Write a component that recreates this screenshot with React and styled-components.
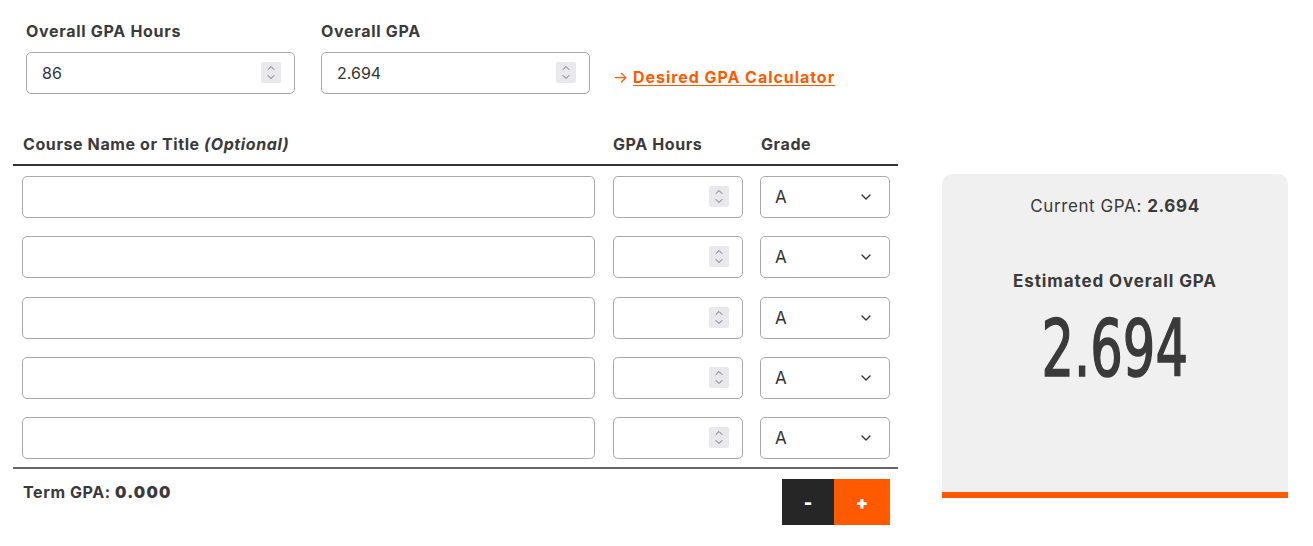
import styled, { createGlobalStyle } from "styled-components";
import { ChevronDown, ChevronUp } from "lucide-react";

const GlobalStyle = createGlobalStyle`
  body {
    margin: 0;
    background: #fff;
    font-family: Inter, "Noto Sans", sans-serif;
    color: #3a3a3a;
  }
  input[type="number"] {
    -moz-appearance: textfield;
  }
  input[type="number"]::-webkit-inner-spin-button,
  input[type="number"]::-webkit-outer-spin-button {
    -webkit-appearance: none;
    margin: 0;
  }
`;

const rows = [1, 2, 3, 4, 5];

function NumberField({ width, value }) {
  return (
    <NumberWrap width={width}>
      <NumberInput type="number" defaultValue={value} />
      <Spinner>
        <ChevronUp size={12} strokeWidth={2} />
        <ChevronDown size={12} strokeWidth={2} />
      </Spinner>
    </NumberWrap>
  );
}

function App() {
  return (
    <Page>
      <GlobalStyle />
      <LeftColumn>
        <TopRow>
          <Field>
            <Label>Overall GPA Hours</Label>
            <NumberField width="269px" value="86" />
          </Field>
          <Field>
            <Label>Overall GPA</Label>
            <NumberField width="269px" value="2.694" />
          </Field>
          <DesiredLink href="#">
            <span>→</span> <u>Desired GPA Calculator</u>
          </DesiredLink>
        </TopRow>

        <Table>
          <HeaderRow>
            <HeadCell>
              Course Name or Title <em>(Optional)</em>
            </HeadCell>
            <HeadCell>GPA Hours</HeadCell>
            <HeadCell>Grade</HeadCell>
          </HeaderRow>
          <Body>
            {rows.map((r) => (
              <CourseRow key={r}>
                <TextInput type="text" />
                <NumberField width="130px" />
                <SelectWrap>
                  <GradeSelect defaultValue="A">
                    <option>A</option>
                    <option>A-</option>
                    <option>B+</option>
                    <option>B</option>
                    <option>C</option>
                    <option>D</option>
                    <option>F</option>
                  </GradeSelect>
                  <Chevron size={16} strokeWidth={2} />
                </SelectWrap>
              </CourseRow>
            ))}
          </Body>
          <Footer>
            <TermGpa>
              Term GPA: <strong>0.000</strong>
            </TermGpa>
            <Buttons>
              <RowButton dark>-</RowButton>
              <RowButton>+</RowButton>
            </Buttons>
          </Footer>
        </Table>
      </LeftColumn>

      <ResultCard>
        <Current>
          Current GPA: <strong>2.694</strong>
        </Current>
        <EstTitle>Estimated Overall GPA</EstTitle>
        <BigNumber>2.694</BigNumber>
      </ResultCard>
    </Page>
  );
}

export default App;

const Page = styled.div`
  display: flex;
  align-items: flex-start;
  gap: 44px;
  padding: 0 13px;
  width: 1313px;
  box-sizing: border-box;
`;

const LeftColumn = styled.div`
  width: 885px;
  flex-shrink: 0;
`;

const TopRow = styled.div`
  display: flex;
  align-items: flex-end;
  gap: 26px;
  padding: 21px 0 0 13px;
`;

const Field = styled.div`
  display: flex;
  flex-direction: column;
  gap: 11px;
`;

const Label = styled.label`
  font-size: 16px;
  line-height: 20px;
  font-weight: 700;
  letter-spacing: 0.7px;
  color: #3a3a3a;
`;

const inputBase = `
  box-sizing: border-box;
  height: 42px;
  border: 1px solid #a9a9a9;
  border-radius: 5px;
  background: #fff;
  font-family: Inter, "Noto Sans", sans-serif;
  font-size: 16px;
  color: #333;
  outline: none;
`;

const NumberWrap = styled.div`
  position: relative;
  width: ${(p) => p.width};
`;

const NumberInput = styled.input`
  ${inputBase}
  width: 100%;
  padding: 0 40px 0 15px;
`;

const Spinner = styled.span`
  position: absolute;
  right: 14px;
  top: 10px;
  width: 20px;
  height: 21px;
  background: #e9e9ed;
  border-radius: 2px;
  display: flex;
  flex-direction: column;
  align-items: center;
  justify-content: center;
  color: #6e6e74;
  pointer-events: none;
  svg {
    margin: -1.5px 0;
  }
`;

const TextInput = styled.input`
  ${inputBase}
  width: 573px;
  padding: 0 14px;
`;

const DesiredLink = styled.a`
  align-self: flex-end;
  margin: 0 0 7px -3px;
  font-size: 16px;
  font-weight: 700;
  letter-spacing: 0.95px;
  color: #ff5a00;
  text-decoration: none;
  span {
    font-weight: 400;
    letter-spacing: 0;
  }
  u {
    text-underline-offset: 2px;
  }
`;

const Table = styled.div`
  margin-top: 40px;
`;

const HeaderRow = styled.div`
  display: grid;
  grid-template-columns: 590px 148px 130px;
  padding: 0 10px 10px 10px;
  border-bottom: 2px solid #333;
`;

const HeadCell = styled.div`
  font-size: 16px;
  line-height: 20px;
  font-weight: 700;
  letter-spacing: 0.6px;
  color: #3a3a3a;
  em {
    font-style: italic;
  }
`;

const Body = styled.div`
  display: flex;
  flex-direction: column;
  gap: 18.3px;
  padding: 10px 0 8px 9px;
  border-bottom: 2px solid #666;
`;

const CourseRow = styled.div`
  display: grid;
  grid-template-columns: 573px 130px 130px;
  column-gap: 17.5px;
`;

const SelectWrap = styled.div`
  position: relative;
  width: 130px;
`;

const GradeSelect = styled.select`
  ${inputBase}
  width: 130px;
  appearance: none;
  padding: 0 14px;
  font-size: 17px;
`;

const Chevron = styled(ChevronDown)`
  position: absolute;
  right: 16px;
  top: 13px;
  color: #333;
  pointer-events: none;
`;

const Footer = styled.div`
  display: flex;
  justify-content: space-between;
  align-items: flex-start;
  padding: 10px 8px 0 10px;
`;

const TermGpa = styled.div`
  font-size: 16px;
  font-weight: 700;
  line-height: 20px;
  letter-spacing: 0.6px;
  margin-top: 3px;
  strong {
    font-weight: 900;
    letter-spacing: 1.2px;
  }
`;

const Buttons = styled.div`
  display: flex;
`;

const RowButton = styled.button`
  width: ${(p) => (p.dark ? "52px" : "56px")};
  height: 46px;
  border: none;
  background: ${(p) => (p.dark ? "#262626" : "#ff5a00")};
  color: #fff;
  font-family: Inter, sans-serif;
  font-size: 18px;
  font-weight: 900;
  cursor: pointer;
`;

const ResultCard = styled.div`
  width: 346px;
  height: 324px;
  box-sizing: border-box;
  margin-top: 174px;
  background: #f0f0f0;
  border-radius: 10px 10px 0 0;
  border-bottom: 6px solid #ff5a00;
  display: flex;
  flex-direction: column;
  align-items: center;
  padding-top: 21px;
  color: #3a3a3a;
`;

const Current = styled.div`
  font-size: 17px;
  line-height: 22px;
  letter-spacing: 0.6px;
  strong {
    font-weight: 700;
  }
`;

const EstTitle = styled.div`
  margin-top: 53px;
  font-size: 17px;
  line-height: 22px;
  font-weight: 700;
  letter-spacing: 0.9px;
`;

const BigNumber = styled.div`
  margin-top: 15px;
  font-family: "DejaVu Sans Condensed", "Liberation Sans Narrow", sans-serif;
  font-stretch: condensed;
  font-size: 79px;
  line-height: 84px;
  color: #3a3a3a;
  -webkit-text-stroke: 1.6px #3a3a3a;
  transform: scaleX(0.72);
`;
